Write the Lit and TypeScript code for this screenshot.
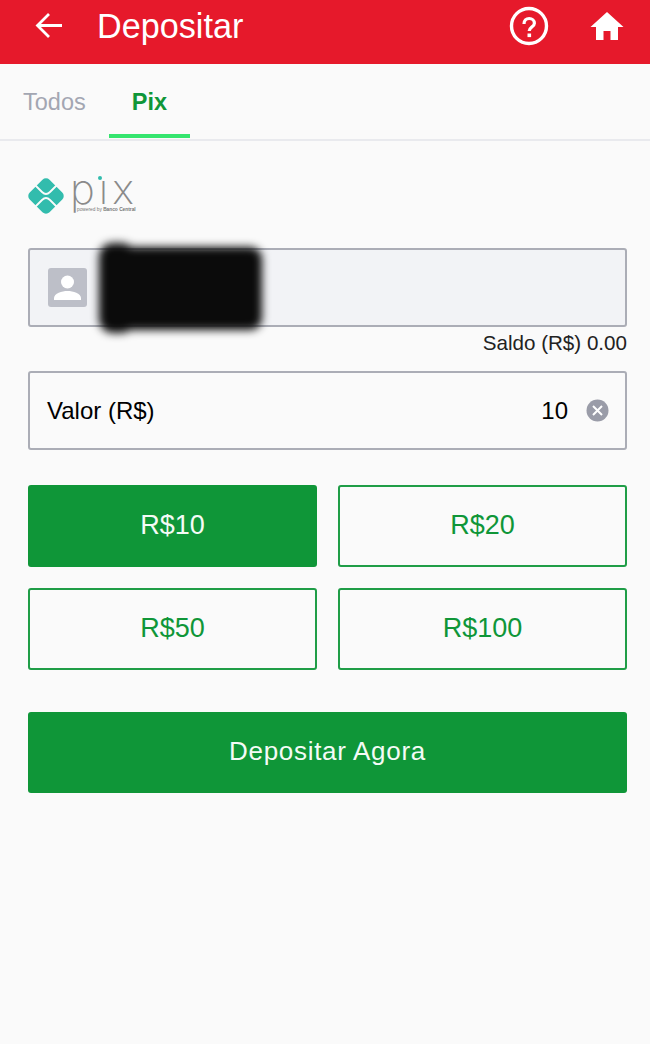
import { LitElement, html, css, svg } from 'lit';
import { customElement, state } from 'lit/decorators.js';

const AMOUNTS = [10, 20, 50, 100];

const backIcon = svg`<path d="M62 25.500H38M49 14 37.500 25.500 49 37" fill="none" stroke="#fff" stroke-width="2.800"/>`;

@customElement('app-root')
export class AppRoot extends LitElement {
  @state()
  private amount = 10;

  static styles = css`
    :host {
      display: block;
      min-height: 1044px;
      background: #fafafa;
      font-family: 'Liberation Sans', Arial, sans-serif;
      color: #000;
    }

    .topbar {
      height: 64px;
      background: #e6192b;
      display: flex;
      align-items: center;
      color: #fff;
      padding-bottom: 13px;
      box-sizing: border-box;
    }

    .back {
      width: 97px;
      height: 51px;
      flex: none;
    }

    .title {
      flex: 1;
      font-size: 34.2px;
      line-height: 40px;
    }

    .help {
      margin-right: 41px;
      display: block;
    }

    .home {
      margin-right: 26px;
      display: block;
    }

    .tabs {
      height: 77px;
      box-sizing: border-box;
      border-bottom: 2px solid #e9eaee;
      display: flex;
      padding-left: 23px;
      gap: 46.5px;
      font-size: 23.5px;
      color: #a3a6b2;
    }

    .tab {
      line-height: 79px;
      height: 75px;
      margin-top: -1px;
      box-sizing: border-box;
    }

    .tab.active {
      color: #0f9638;
      font-weight: 700;
      padding: 0 22.5px;
      margin-left: -23px;
      position: relative;
    }

    .tab.active::after {
      content: '';
      position: absolute;
      left: 0;
      right: 0;
      bottom: 0;
      height: 4px;
      background: #35e56e;
    }

    .body {
      padding: 34px 23px 0 28px;
    }

    .logo {
      display: flex;
      align-items: flex-start;
      gap: 6px;
      height: 73px;
    }

    .logo svg {
      margin-top: 3px;
      flex: none;
    }

    .wordmark {
      display: flex;
      flex-direction: column;
      color: #8a8a8a;
    }

    .letters {
      font-family: 'Inter', sans-serif;
      font-weight: 200;
      font-size: 42px;
      line-height: 28px;
      letter-spacing: 4px;
      height: 29px;
      position: relative;
    }

    .dot {
      position: absolute;
      left: 28px;
      top: 1px;
      width: 4px;
      height: 4px;
      border-radius: 50%;
      background: #32bcad;
    }

    .powered {
      font-size: 4.8px;
      line-height: 8px;
      margin-top: 2px;
      padding-left: 7px;
      color: #777;
      white-space: nowrap;
    }

    .field {
      height: 79px;
      box-sizing: border-box;
      border: 2px solid #abadb6;
      border-radius: 3px;
      display: flex;
      align-items: center;
    }

    .account {
      background: #f2f3f6;
      padding-left: 18px;
      position: relative;
    }

    .avatar {
      width: 39px;
      height: 39px;
      border-radius: 3px;
      background: #bdbfc8;
      display: block;
    }

    .redaction {
      position: absolute;
      left: 71px;
      top: -3px;
      width: 161px;
      height: 83px;
      background: #0b0b0b;
      border-radius: 12px;
      filter: blur(4px);
    }

    .redaction::before {
      content: '';
      position: absolute;
      left: -2px;
      top: -4px;
      width: 36px;
      height: 90px;
      background: #0b0b0b;
      border-radius: 14px;
    }

    .balance {
      text-align: right;
      font-size: 20.6px;
      line-height: 24px;
      height: 44px;
      padding-top: 4px;
      box-sizing: border-box;
      color: #222;
    }

    .value {
      padding: 0 16px 0 17px;
      font-size: 24px;
    }

    .value .label {
      flex: 1;
    }

    .value .number {
      margin-right: 18px;
    }

    .clear {
      display: block;
    }

    .amounts {
      display: grid;
      grid-template-columns: 1fr 1fr;
      gap: 21px;
      margin-top: 35px;
    }

    .amount {
      height: 82px;
      box-sizing: border-box;
      border: 2px solid #1f9d47;
      border-radius: 3px;
      background: transparent;
      color: #0f9638;
      font: inherit;
      font-size: 27px;
      padding: 0 0 2px;
    }

    .amount.selected {
      background: #0f9638;
      border-color: #0f9638;
      color: #f4fbf6;
    }

    .submit {
      display: block;
      width: 100%;
      height: 81px;
      margin-top: 42px;
      border: none;
      border-radius: 3px;
      background: #0f9638;
      color: #f4fbf6;
      font: inherit;
      font-size: 26px;
      letter-spacing: 0.7px;
      padding: 0 0 2px;
    }
  `;

  render() {
    return html`
      <div class="topbar">
        <svg class="back" viewBox="0 0 97 51" width="97" height="51">${backIcon}</svg>
        <div class="title">Depositar</div>
        <svg class="help" width="40" height="40" viewBox="0 0 40 40">
          <circle cx="20" cy="20" r="17.5" fill="none" stroke="#fff" stroke-width="3.4" />
          <path
            d="M15 18c0-3.400 2.200-5.500 5.200-5.500s5.200 2 5.200 4.700c0 3.800-5.200 4-5.200 7.800"
            fill="none"
            stroke="#fff"
            stroke-width="3.2"
          />
          <rect x="18.500" y="27.500" width="3.600" height="3.600" fill="#fff" />
        </svg>
        <svg class="home" width="34" height="30" viewBox="0 0 34 30">
          <path d="M17 1 0.500 16H6v13h7.500v-9h7v9H28V16h5.500z" fill="#fff" />
        </svg>
      </div>

      <div class="tabs">
        <div class="tab">Todos</div>
        <div class="tab active">Pix</div>
      </div>

      <div class="body">
        <div class="logo">
          <svg width="36" height="36" viewBox="0 0 36 36">
            <rect x="4" y="4" width="28" height="28" rx="5" fill="#32bcad" transform="rotate(45 18 18)" />
            <path
              d="M7 7l7 7q4 4 8 0l7-7M7 29l7-7q4-4 8 0l7 7"
              fill="none"
              stroke="#fafafa"
              stroke-width="1.800"
            />
          </svg>
          <div class="wordmark">
            <div class="letters">pıx<span class="dot"></span></div>
            <div class="powered">powered by <b>Banco Central</b></div>
          </div>
        </div>

        <div class="field account">
          <svg class="avatar" viewBox="0 0 39 39">
            <circle cx="19.500" cy="14" r="6.500" fill="#fff" />
            <path d="M6 32v-2c0-4.500 8-7 13.500-7S33 25.500 33 30v2z" fill="#fff" />
          </svg>
          <div class="redaction"></div>
        </div>
        <div class="balance">Saldo (R$) 0.00</div>

        <div class="field value">
          <span class="label">Valor (R$)</span>
          <span class="number">${this.amount}</span>
          <svg class="clear" width="23" height="23" viewBox="0 0 23 23">
            <circle cx="11.500" cy="11.500" r="11" fill="#9a9ca8" />
            <path d="M7 7l9 9M16 7l-9 9" stroke="#fff" stroke-width="2" />
          </svg>
        </div>

        <div class="amounts">
          ${AMOUNTS.map(
            (value) => html`
              <button
                type="button"
                class="amount ${value === this.amount ? 'selected' : ''}"
                @click=${() => (this.amount = value)}
              >
                R$${value}
              </button>
            `,
          )}
        </div>

        <button type="button" class="submit">Depositar Agora</button>
      </div>
    `;
  }
}
